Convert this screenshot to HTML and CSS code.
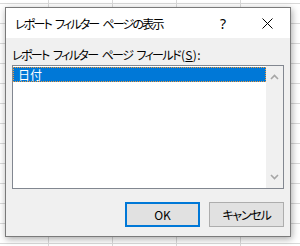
FILE: index.html
```html
<!DOCTYPE html>
<html lang="ja">
<head>
<meta charset="utf-8">
<link rel="stylesheet" href="styles.css">
</head>
<body>
<div class="sheet"></div>
<div class="dialog">
  <div class="titlebar">
    <div class="title">レポート フィルター ページの表示</div>
    <div class="tb-btn help">?</div>
    <div class="tb-btn close">
      <svg width="11" height="11" viewBox="0 0 11 11"><path d="M0.5 0.5 L10.5 10.5 M10.5 0.5 L0.5 10.5" stroke="#000" stroke-width="1" fill="none"/></svg>
    </div>
  </div>
  <div class="body">
    <div class="label">レポート フィルター ページ フィールド<span class="key">(<u>S</u>):</span></div>
    <div class="listbox">
      <div class="items">
        <div class="item selected">日付</div>
      </div>
      <div class="scrollbar">
        <svg class="arrow" width="9" height="6" viewBox="0 0 9 6"><path d="M1 5 L4.5 1.5 L8 5" stroke="#a6a6a6" stroke-width="1.6" fill="none"/></svg>
        <svg class="arrow" width="9" height="6" viewBox="0 0 9 6"><path d="M1 1 L4.5 4.5 L8 1" stroke="#a6a6a6" stroke-width="1.6" fill="none"/></svg>
      </div>
    </div>
    <div class="buttons">
      <div class="btn default">OK</div>
      <div class="btn cancel">キャンセル</div>
    </div>
  </div>
</div>
</body>
</html>
```

FILE: styles.css
```css
html, body {
  margin: 0;
  padding: 0;
}
body {
  width: 300px;
  height: 246px;
  position: relative;
  overflow: hidden;
  background-color: #fff;
  font-family: "Noto Sans CJK JP", "Noto Sans", sans-serif;
  font-feature-settings: "palt";
  color: #000;
}
.sheet {
  width: 300px;
  height: 246px;
  background-image:
    linear-gradient(to right, #d9d9d9 1px, transparent 1px),
    linear-gradient(to bottom, #d9d9d9 1px, transparent 1px);
  background-size: 64px 20px;
  background-position: 48px 3px;
}
.dialog {
  position: absolute;
  left: 5px;
  top: 7px;
  width: 284px;
  height: 228px;
  border: 1px solid #7a7a7a;
  box-shadow: 1px 2px 7px rgba(0, 0, 0, 0.35);
  display: flex;
  flex-direction: column;
}
.titlebar {
  height: 30px;
  background: #fff;
  display: flex;
  align-items: center;
}
.title {
  flex: 1;
  padding-left: 9px;
  font-size: 12px;
  line-height: 16px;
  padding-top: 1px;
  letter-spacing: -1.8px;
  word-spacing: 3px;
  white-space: nowrap;
}
.tb-btn {
  width: 46px;
  height: 30px;
  display: flex;
  align-items: center;
  justify-content: center;
}
.help {
  font-family: "Noto Sans", sans-serif;
  font-size: 14px;
  padding-left: 4px;
  box-sizing: border-box;
}
.close svg {
  display: block;
}
.body {
  flex: 1;
  background: #f0f0f0;
  padding: 9px 6px 9px 6px;
  display: flex;
  flex-direction: column;
}
.label {
  font-size: 12px;
  line-height: 16px;
  white-space: nowrap;
  margin-bottom: 2px;
  letter-spacing: -1.6px;
  word-spacing: 3px;
}
.label .key {
  letter-spacing: 0.3px;
  padding-left: 1px;
}
.label u {
  text-underline-offset: 1px;
}
.listbox {
  height: 122px;
  border: 1px solid #828790;
  background: #fff;
  display: flex;
}
.items {
  flex: 1;
  padding-top: 1px;
}
.item {
  height: 15px;
  font-size: 12px;
  line-height: 15px;
  padding-left: 5px;
  box-sizing: border-box;
}
.item.selected {
  background: #0078d7;
  color: #fff;
  outline: 1px dotted #f29a3a;
  outline-offset: -1px;
}
.scrollbar {
  width: 17px;
  background: #f0f0f0;
  display: flex;
  flex-direction: column;
  justify-content: space-between;
  align-items: center;
  padding: 8px 0 8px 0;
}
.arrow {
  display: block;
}
.buttons {
  margin-top: 13px;
  display: flex;
  justify-content: flex-end;
  gap: 9px;
}
.btn {
  width: 75px;
  height: 25px;
  box-sizing: border-box;
  border: 1px solid #adadad;
  background: #e1e1e1;
  display: flex;
  align-items: center;
  justify-content: center;
  font-size: 12px;
}
.btn.default {
  border: 2px solid #0078d7;
}
.btn.cancel {
  letter-spacing: -1.2px;
}
```
